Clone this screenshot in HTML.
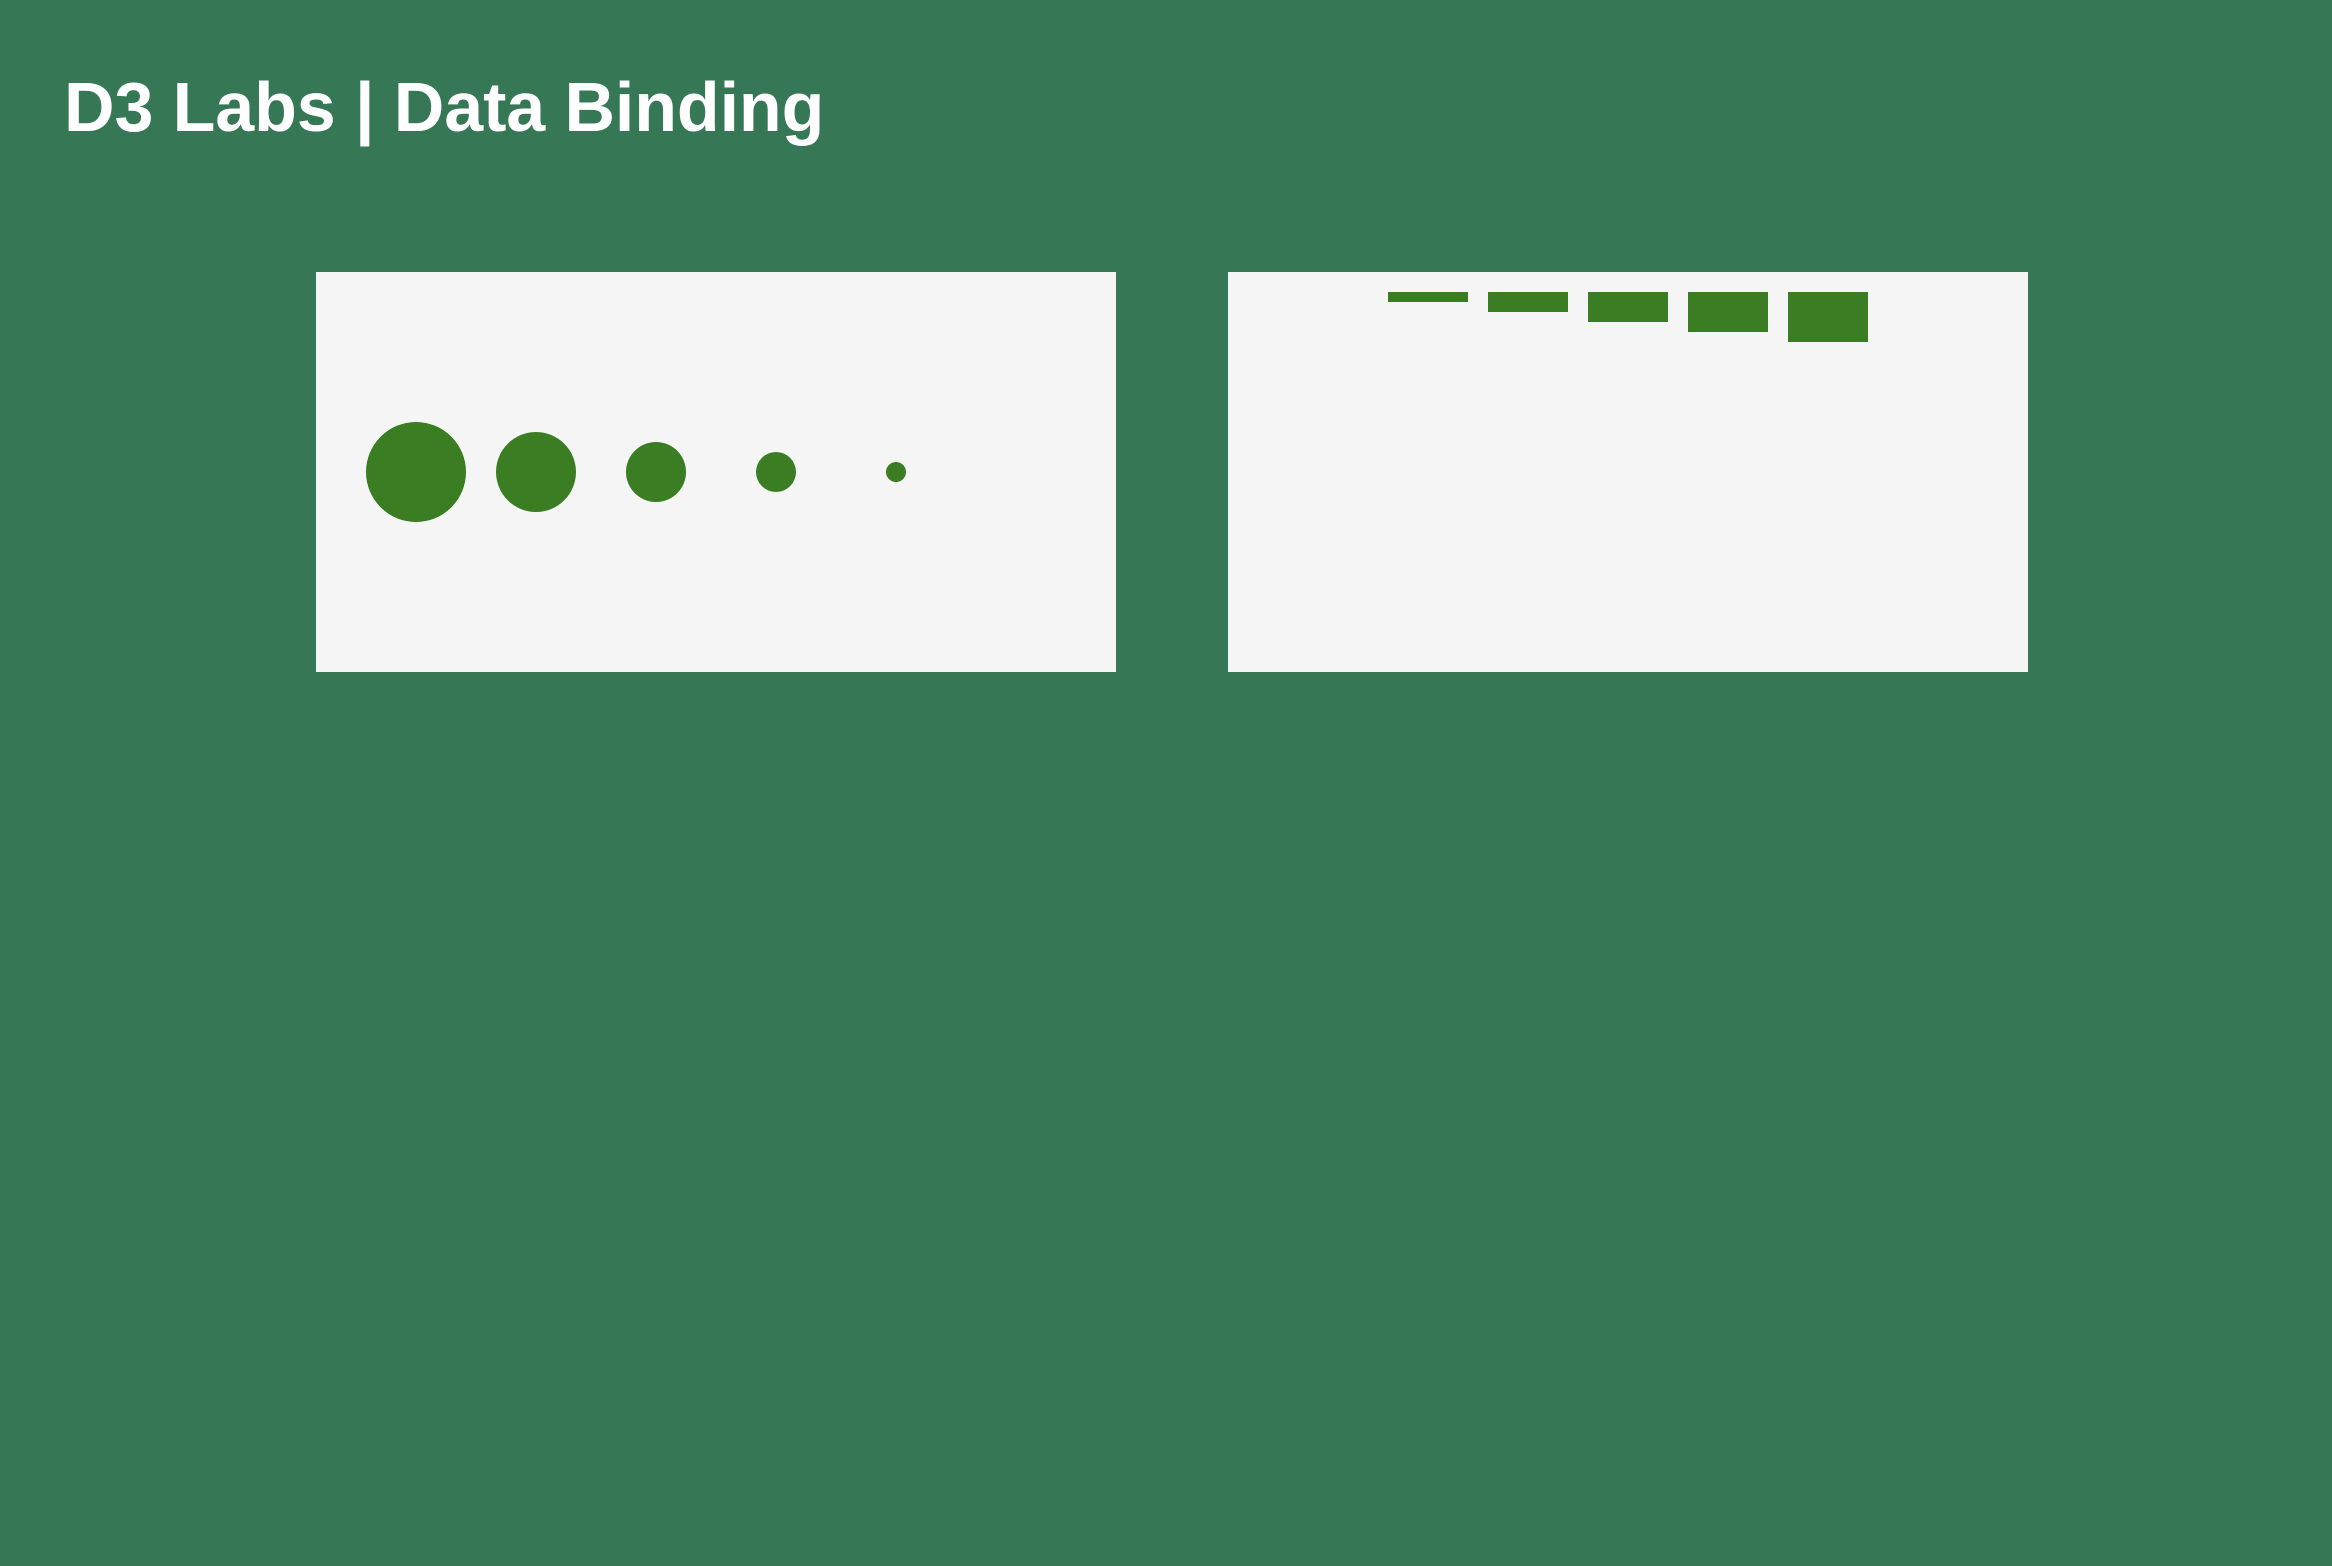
<!DOCTYPE html>
<html><head><meta charset="utf-8"><style>
html,body{margin:0;padding:0;width:2332px;height:1566px;background:#367856;overflow:hidden}
h1{position:absolute;left:64px;top:57px;margin:0;font-family:"Liberation Sans",Arial,sans-serif;font-weight:bold;font-size:70px;line-height:100px;color:#fff;white-space:nowrap;letter-spacing:-0.1px}
svg{position:absolute;top:272px;background:#f5f5f5}
</style></head><body>
<h1>D3 Labs | Data Binding</h1>
<svg style="left:316px" width="800" height="400">
<g fill="#3a7d23">
<circle cx="100" cy="200" r="50"/>
<circle cx="220" cy="200" r="40"/>
<circle cx="340" cy="200" r="30"/>
<circle cx="460" cy="200" r="20"/>
<circle cx="580" cy="200" r="10"/>
</g></svg>
<svg style="left:1228px" width="800" height="400">
<g fill="#3a7d23">
<rect x="160" y="20" width="80" height="10"/>
<rect x="260" y="20" width="80" height="20"/>
<rect x="360" y="20" width="80" height="30"/>
<rect x="460" y="20" width="80" height="40"/>
<rect x="560" y="20" width="80" height="50"/>
</g></svg>
</body></html>
